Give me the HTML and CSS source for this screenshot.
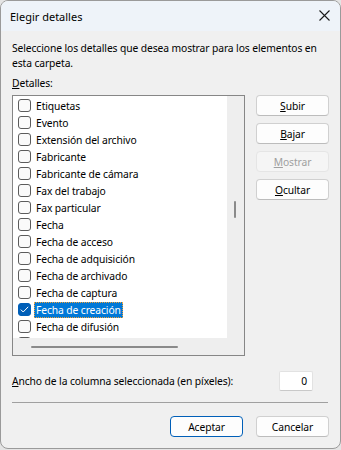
FILE: index.html
```
<!DOCTYPE html>
<html lang="es">
<head>
  <meta charset="UTF-8">
  <meta name="viewport" content="width=device-width, initial-scale=1.0">
  <title>Elegir detalles</title>
  <link rel="stylesheet" href="styles.css">
</head>
<body>

  <div class="ventana">
    <div class="titulo">
      <span>Elegir detalles</span>
      <svg class="cerrar" width="11" height="11" viewBox="0 0 11 11">
        <path d="M0.5 0.5 L10.5 10.5 M10.5 0.5 L0.5 10.5" stroke="#1a1a1a" stroke-width="1.1" fill="none"/>
      </svg>
    </div>

    <div class="contenido">
      <p class="descripcion">Seleccione los detalles que desea mostrar para los elementos en<br>esta carpeta.</p>
      <div class="etiqueta"><u>D</u>etalles:</div>

      <div class="principal">
        <div class="lista">
          <div class="lista-area">
            <ul class="items">
              <li><span class="check"></span><span class="texto">Etiquetas</span></li>
              <li><span class="check"></span><span class="texto">Evento</span></li>
              <li><span class="check"></span><span class="texto">Extensión del archivo</span></li>
              <li><span class="check"></span><span class="texto">Fabricante</span></li>
              <li><span class="check"></span><span class="texto">Fabricante de cámara</span></li>
              <li><span class="check"></span><span class="texto">Fax del trabajo</span></li>
              <li><span class="check"></span><span class="texto">Fax particular</span></li>
              <li><span class="check"></span><span class="texto">Fecha</span></li>
              <li><span class="check"></span><span class="texto">Fecha de acceso</span></li>
              <li><span class="check"></span><span class="texto">Fecha de adquisición</span></li>
              <li><span class="check"></span><span class="texto">Fecha de archivado</span></li>
              <li><span class="check"></span><span class="texto">Fecha de captura</span></li>
              <li class="seleccionado">
                <span class="check marcado">
                  <svg width="9" height="7" viewBox="0 0 9 7"><path d="M0.8 3.6 L3.2 6 L8.2 0.8" stroke="#fff" stroke-width="1" fill="none"/></svg>
                </span>
                <span class="texto">Fecha de creación</span>
              </li>
              <li><span class="check"></span><span class="texto">Fecha de difusión</span></li>
              <li><span class="check"></span></li>
            </ul>
            <div class="vscroll"><div class="vthumb"></div></div>
          </div>
          <div class="hscroll">
            <div class="htrack"><div class="hthumb"></div></div>
            <div class="esquina"></div>
          </div>
        </div>

        <div class="botones-lado">
          <button class="boton"><u>S</u>ubir</button>
          <button class="boton"><u>B</u>ajar</button>
          <button class="boton" disabled><u>M</u>ostrar</button>
          <button class="boton"><u>O</u>cultar</button>
        </div>
      </div>

      <div class="ancho">
        <span><u>A</u>ncho de la columna seleccionada (en píxeles):</span>
        <div class="campo">0</div>
      </div>

      <div class="separador"></div>

      <div class="pie">
        <button class="boton predeterminado">Aceptar</button>
        <button class="boton">Cancelar</button>
      </div>
    </div>
  </div>

</body>
</html>
```

FILE: styles.css
```
body {
  margin: 0;
  width: 341px;
  height: 450px;
  background-color: #e4e4e4;
  font-family: "Noto Sans", "Open Sans", sans-serif;
  font-size: 10.3px;
  letter-spacing: -0.1px;
  color: #000;
}
.ventana {
  box-sizing: border-box;
  width: 341px;
  height: 449px;
  border: 1px solid #9a9a9a;
  border-radius: 8px;
  background-color: #f0f0f0;
  overflow: hidden;
  display: flex;
  flex-direction: column;
}
.titulo {
  height: 30px;
  background-color: #eef3f9;
  display: flex;
  align-items: center;
  justify-content: space-between;
  padding: 0 10px 0 9px;
  font-size: 11px;
  letter-spacing: 0;
}
.cerrar {
  margin-top: -1px;
}
.contenido {
  padding: 10px 11px 0 11px;
  flex: 1;
  display: flex;
  flex-direction: column;
}
.descripcion {
  margin: 0;
  line-height: 15px;
}
.etiqueta {
  margin-top: 5px;
  line-height: 15px;
}
.principal {
  margin-top: 4px;
  display: flex;
  gap: 11px;
}
.lista {
  width: 231px;
  height: 259px;
  border: 1px solid #868686;
  display: flex;
  flex-direction: column;
}
.lista-area {
  flex: 1;
  display: flex;
  overflow: hidden;
  background-color: #fff;
}
.items {
  list-style: none;
  margin: 0;
  padding: 1px 0 0 5px;
  flex: 1;
}
.items li {
  height: 17px;
  display: flex;
  align-items: center;
  white-space: nowrap;
}
.check {
  box-sizing: border-box;
  width: 13px;
  height: 13px;
  border: 1px solid #5c5c5c;
  border-radius: 3px;
  background-color: #fafafa;
  margin-right: 3px;
  display: flex;
  align-items: center;
  justify-content: center;
}
.check.marcado {
  background-color: #005fb8;
  border-color: #005fb8;
}
.texto {
  padding: 0 2px;
  line-height: 16px;
}
.seleccionado .texto {
  background-color: #0078d7;
  color: #fff;
  outline: 1px dotted #f2a23a;
  outline-offset: -1px;
}
.vscroll {
  width: 17px;
  background-color: #eeeeee;
  position: relative;
}
.vthumb {
  position: absolute;
  left: 7px;
  top: 105px;
  width: 2px;
  height: 17px;
  border-radius: 1px;
  background-color: #8a8a8a;
}
.hscroll {
  height: 17px;
  display: flex;
  background-color: #eeeeee;
}
.htrack {
  flex: 1;
  position: relative;
}
.hthumb {
  position: absolute;
  left: 18px;
  top: 8px;
  width: 147px;
  height: 2px;
  border-radius: 1px;
  background-color: #8a8a8a;
}
.esquina {
  width: 17px;
}
.botones-lado {
  display: flex;
  flex-direction: column;
  gap: 7px;
}
.boton {
  box-sizing: border-box;
  width: 73px;
  height: 21px;
  padding: 0;
  font-family: inherit;
  font-size: 10.3px;
  letter-spacing: -0.1px;
  color: #000;
  background-color: #fdfdfd;
  border: 1px solid #d0d0d0;
  border-bottom-color: #bcbcbc;
  border-radius: 4px;
}
.boton:disabled {
  background-color: #f5f5f5;
  border-color: #e5e5e5;
  color: #a0a0a0;
}
.boton.predeterminado {
  border: 1px solid #005fb8;
}
.ancho {
  margin-top: 15px;
  display: flex;
  align-items: center;
  justify-content: space-between;
  padding-right: 16px;
}
.campo {
  box-sizing: border-box;
  width: 34px;
  height: 20px;
  background-color: #fff;
  border: 1px solid #e2e2e2;
  border-bottom-color: #c9c9c9;
  border-radius: 2px;
  text-align: right;
  padding-right: 5px;
  line-height: 18px;
}
.separador {
  margin-top: 11px;
  height: 1px;
  background-color: #a0a0a0;
  margin-right: 1px;
}
.pie {
  margin-top: 13px;
  display: flex;
  justify-content: flex-end;
  gap: 13px;
}
```
